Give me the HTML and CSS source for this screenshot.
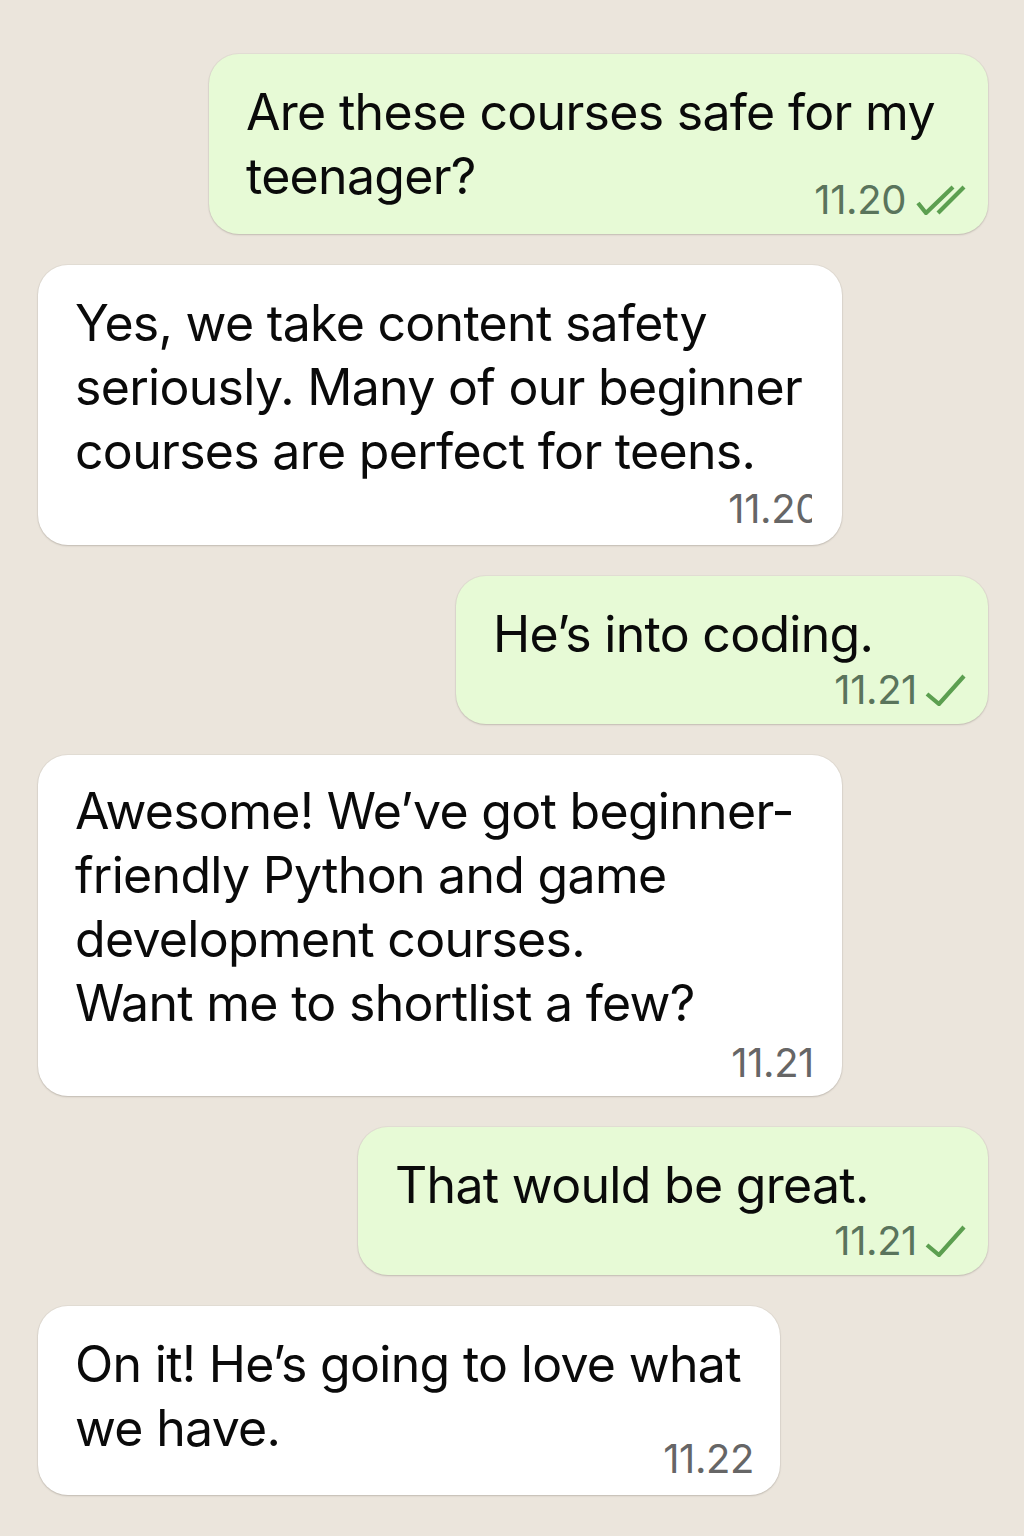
FILE: index.html
```html
<!DOCTYPE html>
<html lang="en">
<head>
<meta charset="utf-8">
<title>Chat</title>
<link rel="stylesheet" href="styles.css">
</head>
<body>
<main class="chat">
  <div class="msg msg--out w-q1">
    <p class="text">Are these courses safe for my<br>teenager?</p>
    <div class="meta meta--inline">
      <span class="time">11.20</span>
      <svg class="tick tick--double" width="50" height="30" viewBox="-2 -2 50 30" aria-hidden="true"><path d="M0 16 L8 26 L35 0 M20 26 L46 0" fill="none" stroke="currentColor" stroke-width="4.2"/></svg>
    </div>
  </div>

  <div class="msg msg--in w-a1">
    <p class="text">Yes, we take content safety<br>seriously. Many of our beginner<br>courses are perfect for teens.</p>
    <div class="meta meta--a1">
      <span class="time">11.2<span class="clip">0</span></span>
    </div>
  </div>

  <div class="msg msg--out w-q2">
    <p class="text">He’s into coding.</p>
    <div class="meta">
      <span class="time">11.21</span>
      <svg class="tick" width="41" height="32" viewBox="-2 -2 41 32" aria-hidden="true"><path d="M0 18 L12 28 L37 0" fill="none" stroke="currentColor" stroke-width="4.2"/></svg>
    </div>
  </div>

  <div class="msg msg--in w-a2">
    <p class="text">Awesome! We’ve got beginner-<br>friendly Python and game<br>development courses.<br>Want me to shortlist a few?</p>
    <div class="meta meta--a2">
      <span class="time">11.21</span>
    </div>
  </div>

  <div class="msg msg--out w-q3">
    <p class="text">That would be great.</p>
    <div class="meta">
      <span class="time">11.21</span>
      <svg class="tick" width="41" height="32" viewBox="-2 -2 41 32" aria-hidden="true"><path d="M0 18 L12 28 L37 0" fill="none" stroke="currentColor" stroke-width="4.2"/></svg>
    </div>
  </div>

  <div class="msg msg--in w-a3">
    <p class="text">On it! He’s going to love what<br>we have.</p>
    <div class="meta meta--a3">
      <span class="time">11.22</span>
    </div>
  </div>
</main>
</body>
</html>
```

FILE: styles.css
```css
* { box-sizing: border-box; }

html, body {
  margin: 0;
  padding: 0;
}

body {
  background: #ebe5dc;
  font-family: "Inter", "Noto Sans", "Liberation Sans", sans-serif;
  color: #0a0a0a;
  width: 1024px;
  min-height: 1536px;
}

.chat {
  display: flex;
  flex-direction: column;
  gap: 31px;
  padding: 54px 36px 40px 38px;
}

.msg {
  border-radius: 30px;
  padding: 26px 22px 14px 37px;
  box-shadow: 0 1px 2px rgba(60, 50, 40, 0.2), 0 0 0 1px rgba(60, 50, 40, 0.04);
}

.msg--out {
  align-self: flex-end;
  background: #e7fad6;
}

.msg--in {
  align-self: flex-start;
  background: #ffffff;
}

.w-q1 { width: 779px; }
.w-a1 { width: 804px; padding-right: 30px; padding-bottom: 16px; }
.w-q2 { width: 532px; padding-top: 26px; }
.w-a2 { width: 804px; padding-right: 28px; padding-top: 24px; padding-bottom: 13px; }
.w-q3 { width: 630px; }
.w-a3 { width: 742px; padding-right: 26px; padding-bottom: 16px; }

.text {
  margin: 0;
  font-size: 50px;
  line-height: 64px;
  white-space: nowrap;
  letter-spacing: -0.7px;
}

.meta {
  display: flex;
  justify-content: flex-end;
  align-items: center;
  gap: 8px;
  margin-top: 4px;
  height: 40px;
  font-size: 40px;
  line-height: 40px;
  letter-spacing: -0.4px;
}

.msg--out .meta { color: #5a745c; }
.msg--in .meta { color: #666666; }

.meta--inline {
  margin-top: -28px;
  gap: 10px;
}

.meta--a1 { margin-top: 6px; }
.meta--a2 { margin-top: 8px; }
.meta--a3 { margin-top: -21px; }

.tick {
  color: #5c9f50;
  flex: none;
}

.clip {
  display: inline-block;
  width: 0.42em;
  overflow: hidden;
  vertical-align: bottom;
}
```
